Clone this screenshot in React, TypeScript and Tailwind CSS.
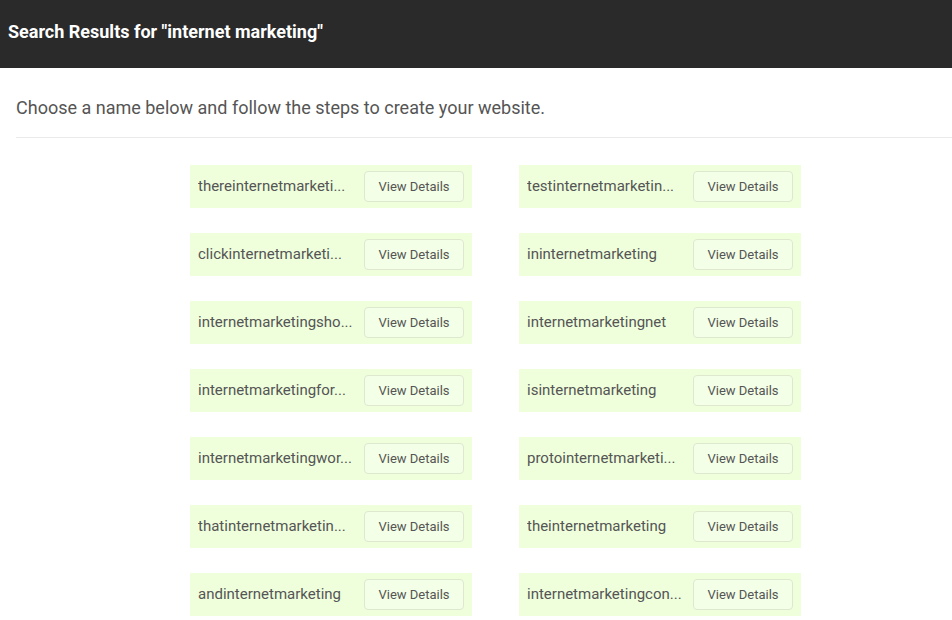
const names: [string, string][] = [
  ['thereinternetmarketi...', 'testinternetmarketin...'],
  ['clickinternetmarketi...', 'ininternetmarketing'],
  ['internetmarketingsho...', 'internetmarketingnet'],
  ['internetmarketingfor...', 'isinternetmarketing'],
  ['internetmarketingwor...', 'protointernetmarketi...'],
  ['thatinternetmarketin...', 'theinternetmarketing'],
  ['andinternetmarketing', 'internetmarketingcon...'],
]

function ResultCard({ name }: { name: string }) {
  return (
    <div className="w-[282px] h-[43px] bg-[#efffdc] flex items-center pl-2 pr-2">
      <span className="flex-1 text-[15px] text-[#555] whitespace-nowrap overflow-hidden">{name}</span>
      <button className="w-[100px] h-[31px] rounded border border-[#dde8cf] bg-[#f3ffe6] text-[13px] text-[#555]">
        View Details
      </button>
    </div>
  )
}

export default function App() {
  return (
    <div className="min-h-screen bg-white overflow-hidden" style={{ fontFamily: 'Roboto, "Liberation Sans", sans-serif' }}>
      <div className="h-[68px] bg-[#2a2a2a] flex items-center px-2 pb-[6px]">
        <h1 className="text-white font-bold text-[18px]">Search Results for "internet marketing"</h1>
      </div>

      <div className="pl-4">
        <p className="pt-[26px] pb-[16px] text-[18px] text-[#555] border-b border-[#eaeaea]">
          Choose a name below and follow the steps to create your website.
        </p>
      </div>

      <div className="pl-[190px] pt-[27px] flex flex-col gap-[25px]">
        {names.map(([a, b], i) => (
          <div key={i} className="flex gap-[47px]">
            <ResultCard name={a} />
            <ResultCard name={b} />
          </div>
        ))}
      </div>
    </div>
  )
}
